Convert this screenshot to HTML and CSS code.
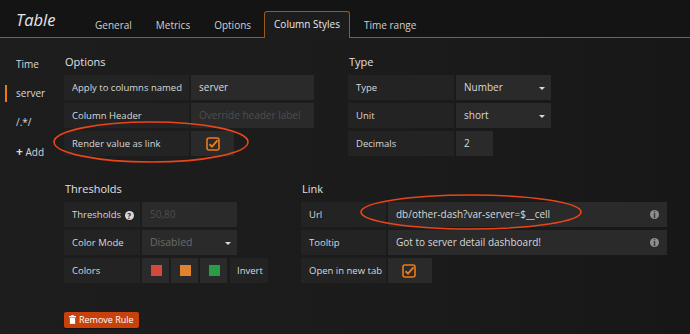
FILE: index.html
```html
<!DOCTYPE html>
<html lang="en">
<head>
  <meta charset="UTF-8">
  <title>Table - Column Styles</title>
  <link rel="stylesheet" href="styles.css">
</head>
<body>
  <div class="header">
    <div class="title">Table</div>
    <div class="tabs">
      <div class="tab">General</div>
      <div class="tab">Metrics</div>
      <div class="tab">Options</div>
      <div class="tab active">Column Styles</div>
      <div class="tab">Time range</div>
    </div>
  </div>

  <div class="editor">
    <div class="sidebar">
      <div class="side-item">Time</div>
      <div class="side-item selected">server</div>
      <div class="side-item">/.*/</div>
      <div class="side-item"><span class="plus">+</span> Add</div>
    </div>

    <div class="main">
      <div class="section-row">
        <div class="section options">
          <h5>Options</h5>
          <div class="form-row">
            <div class="label">Apply to columns named</div>
            <div class="input wide">server</div>
          </div>
          <div class="form-row">
            <div class="label">Column Header</div>
            <div class="input wide placeholder">Override header label</div>
          </div>
          <div class="form-row">
            <div class="label">Render value as link</div>
            <div class="input check-box">
              <svg class="checkmark" width="14" height="14" viewBox="0 0 14 14"><rect x="1" y="1" width="12" height="12" rx="2" fill="none" stroke="#eb7b18" stroke-width="1.6"/><path d="M3.5 7.2 L6 9.6 L11.5 3.4" fill="none" stroke="#eb7b18" stroke-width="2"/></svg>
            </div>
          </div>
        </div>

        <div class="section type">
          <h5>Type</h5>
          <div class="form-row">
            <div class="label">Type</div>
            <div class="input select">Number<span class="caret"></span></div>
          </div>
          <div class="form-row">
            <div class="label">Unit</div>
            <div class="input select">short<span class="caret"></span></div>
          </div>
          <div class="form-row">
            <div class="label">Decimals</div>
            <div class="input small">2</div>
          </div>
        </div>
      </div>

      <div class="section-row">
        <div class="section thresholds">
          <h5>Thresholds</h5>
          <div class="form-row">
            <div class="label">Thresholds <span class="help">?</span></div>
            <div class="input mid placeholder">50,80</div>
          </div>
          <div class="form-row">
            <div class="label">Color Mode</div>
            <div class="input mid select disabled">Disabled<span class="caret"></span></div>
          </div>
          <div class="form-row">
            <div class="label">Colors</div>
            <div class="input swatch"><span class="color" style="background:#d44a3a"></span></div>
            <div class="input swatch"><span class="color" style="background:#e0822e"></span></div>
            <div class="input swatch"><span class="color" style="background:#299c46"></span></div>
            <div class="input invert">Invert</div>
          </div>
        </div>

        <div class="section link">
          <h5>Link</h5>
          <div class="form-row">
            <div class="label">Url</div>
            <div class="input long">db/other-dash?var-server=$__cell<span class="info">i</span></div>
          </div>
          <div class="form-row">
            <div class="label">Tooltip</div>
            <div class="input long">Got to server detail dashboard!<span class="info">i</span></div>
          </div>
          <div class="form-row">
            <div class="label">Open in new tab</div>
            <div class="input check-box">
              <svg class="checkmark" width="14" height="14" viewBox="0 0 14 14"><rect x="1" y="1" width="12" height="12" rx="2" fill="none" stroke="#eb7b18" stroke-width="1.6"/><path d="M3.5 7.2 L6 9.6 L11.5 3.4" fill="none" stroke="#eb7b18" stroke-width="2"/></svg>
            </div>
          </div>
        </div>
      </div>

      <div class="btn-remove">
        <svg width="7" height="9" viewBox="0 0 8 10"><rect x="0" y="1" width="8" height="1.5" fill="#fff"/><rect x="2.5" y="0" width="3" height="1.5" fill="#fff"/><rect x="1" y="3" width="6" height="7" fill="#fff"/></svg>
        Remove Rule
      </div>
    </div>
  </div>

  <!-- annotation ellipses drawn over the screenshot -->
  <svg class="annotations" width="690" height="334" viewBox="0 0 690 334">
    <ellipse cx="151" cy="142" rx="97" ry="20" fill="none" stroke="#e8461a" stroke-width="1.6"/>
    <ellipse cx="471" cy="212" rx="110" ry="17" fill="none" stroke="#e8461a" stroke-width="1.6"/>
  </svg>
</body>
</html>
```

FILE: styles.css
```css
body {
  margin: 0;
  width: 690px;
  height: 334px;
  overflow: hidden;
  font-family: "Open Sans", "Noto Sans", sans-serif;
  background: linear-gradient(90deg, #1e1d1d 0%, #1b1b1b 60%, #171717 100%);
  color: #d8d9da;
  position: relative;
  white-space: nowrap;
}

.header {
  display: flex;
  align-items: flex-end;
  height: 37px;
  background-color: #141414;
  border-bottom: 1px solid #9a5a1c;
  padding-left: 16px;
}

.title {
  font-size: 16.5px;
  font-style: italic;
  color: #e4e4e4;
  align-self: flex-start;
  margin-top: 8px;
  width: 68px;
}

.tabs {
  display: flex;
  align-items: flex-end;
}

.tab {
  font-size: 10px;
  color: #d0d0d0;
  height: 25px;
  line-height: 25px;
  padding: 0 10px;
  margin-right: 2px;
  margin-bottom: -1px;
  border: 1px solid transparent;
  border-bottom: none;
}

.tab.active {
  background-color: #1d1c1c;
  border-color: #9a5a1c;
  border-radius: 3px 3px 0 0;
  height: 26px;
  padding: 0 9px;
  margin: 0 3px -1px 0;
  color: #e8e8e8;
}

.editor {
  display: flex;
  padding-top: 12px;
}

.sidebar {
  width: 64px;
  flex-shrink: 0;
}

.side-item {
  position: relative;
  height: 29px;
  line-height: 29px;
  padding-left: 16px;
  font-size: 10px;
  color: #d8d9da;
}

.side-item.selected::before {
  content: '';
  position: absolute;
  left: 5px;
  top: 6px;
  width: 2px;
  height: 17px;
  background-color: #eb7b18;
}

.plus {
  font-weight: bold;
  font-size: 12px;
}

.main {
  flex: 1;
  padding-top: 3px;
}

.section-row {
  display: flex;
  margin-bottom: 21px;
}

.section h5 {
  margin: 0 0 5px 1px;
  font-size: 11px;
  font-weight: 400;
  height: 17px;
  line-height: 17px;
  color: #e0e0e0;
}

.options { width: 284px; }
.type { width: 240px; }
.thresholds { width: 237px; }

.form-row {
  display: flex;
  height: 25px;
  margin-bottom: 3px;
}

.label {
  background-color: #232323;
  font-size: 9.5px;
  line-height: 25px;
  padding-left: 8px;
  margin-right: 2px;
  box-sizing: border-box;
  color: #d8d9da;
}

.options .label { width: 125px; }
.type .label { width: 106px; }
.thresholds .label { width: 76px; }
.link .label { width: 85px; }

.input {
  background-color: #2a2a2a;
  font-size: 10px;
  line-height: 25px;
  padding-left: 8px;
  box-sizing: border-box;
  color: #d8d9da;
  position: relative;
}

.input.wide { width: 123px; }
.input.small { width: 37px; }
.input.mid { width: 95px; }
.input.long { width: 279px; }

.input.select {
  width: 95px;
}

.input.placeholder {
  color: #4e4e4e;
}

.input.disabled {
  color: #6a6a6a;
  font-size: 10.5px;
}

.caret {
  position: absolute;
  right: 6px;
  top: 12px;
  border-left: 3px solid transparent;
  border-right: 3px solid transparent;
  border-top: 3px solid #d8d9da;
}

.check-box {
  width: 43px;
  padding-left: 15px;
}

.check-box .checkmark {
  margin-top: 6px;
}

.link .check-box {
  width: 44px;
  padding-left: 14px;
}

.swatch {
  width: 27px;
  margin-right: 2px;
  padding-left: 9px;
}

.color {
  display: inline-block;
  width: 11px;
  height: 11px;
  margin-top: 7px;
  vertical-align: top;
}

.invert {
  width: 38px;
  font-size: 9.5px;
  background-color: #232323;
  padding-left: 7px;
  margin-left: 1px;
}

.help {
  display: inline-block;
  width: 9px;
  height: 9px;
  border-radius: 50%;
  background-color: #d8d9da;
  color: #232323;
  font-size: 8px;
  font-weight: bold;
  line-height: 9px;
  text-align: center;
  vertical-align: -1px;
  margin-left: 1px;
}

.info {
  position: absolute;
  right: 8px;
  top: 8px;
  width: 9px;
  height: 9px;
  border-radius: 50%;
  background-color: #8e8e8e;
  color: #2a2a2a;
  font-size: 8px;
  font-weight: bold;
  line-height: 9px;
  text-align: center;
}

.btn-remove {
  display: inline-flex;
  align-items: center;
  gap: 3px;
  margin-top: 3px;
  height: 16px;
  padding: 0 5px;
  background-color: #c8410d;
  border-radius: 2px;
  font-size: 9px;
  color: #fff;
  box-shadow: 0 1px 1px rgba(0, 0, 0, 0.4);
}

.annotations {
  position: absolute;
  left: 0;
  top: 0;
  pointer-events: none;
}
```
